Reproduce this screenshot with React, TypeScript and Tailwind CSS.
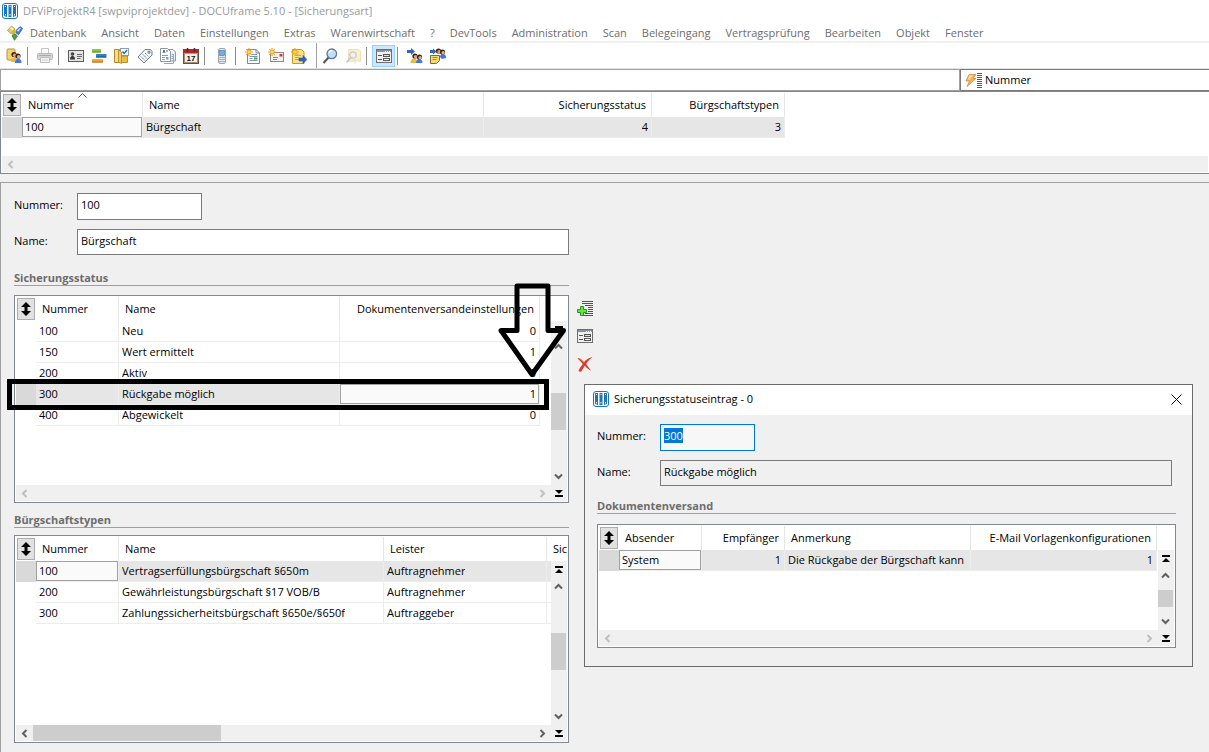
import React, { useEffect, useRef } from "react"

interface Column {
	title: string
	width: number
	align?: "right"
	sorted?: boolean
}

interface DataGridProps {
	label: string
	columns: Column[]
	rows: string[][]
	selectedRow: number
	focusedColumn: number
	className: string
	verticalBar?: boolean
	scrollable?: boolean
	openEnd?: boolean
}

const MENU = [
	"Datenbank",
	"Ansicht",
	"Daten",
	"Einstellungen",
	"Extras",
	"Warenwirtschaft",
	"?",
	"DevTools",
	"Administration",
	"Scan",
	"Belegeingang",
	"Vertragsprüfung",
	"Bearbeiten",
	"Objekt",
	"Fenster",
]

const Icon = ({ children }: { children: React.ReactNode }) => (
	<svg width="16" height="16" viewBox="0 0 16 16" fill="none" className="block shrink-0" aria-hidden="true">
		{children}
	</svg>
)

const AppIcon = () => (
	<Icon>
		<rect x="0.5" y="0.5" width="15" height="15" rx="2.5" fill="#fff" stroke="#1b75bb" />
		<path d="M2 2h3v12L2 13zM6.500 2h3v12h-3zM11 2h3v11l-3 1z" fill="#1b75bb" />
		<path d="M3.500 3v1M8 3v1M12.500 3v1M3.500 11v1.500M8 11v1.500M12.500 11v1.500" stroke="#fff" />
	</Icon>
)

const DatabaseIcon = () => (
	<Icon>
		<path d="M4.500 1L8 4 4 8.500.5 5.500z" fill="#e3cd5c" stroke="#a08a2c" strokeWidth="0.700" />
		<path d="M4.500 1.800L7 4 5.500 5.500 3 3.500z" fill="#f7eeb0" />
		<path d="M9 5.500L13 1.500l2.600 2-4.100 6.300-2.500-2z" fill="#4a7fd6" stroke="#264f9c" strokeWidth="0.700" />
		<path d="M9.800 5.500L13 2.500l1 .8-3 3.700z" fill="#b9d3f7" />
		<path d="M5 10.500L7.800 8.500l2.700 2.500-3 4.300z" fill="#4f9e3f" stroke="#2c6a24" strokeWidth="0.700" />
		<path d="M4 8.500L8 4.500 9 7.500 6 9.500z" fill="#cdb440" />
	</Icon>
)

const Head = ({ x, y }: { x: number; y: number }) => (
	<>
		<circle cx={x} cy={y} r="2.600" fill="#3a2417" />
		<ellipse cx={x + 0.6} cy={y + 0.7} rx="1.700" ry="1.800" fill="#e8a878" />
	</>
)

const UsersIcon = () => (
	<Icon>
		<rect x="1" y="1" width="8" height="11" rx="1" fill="#f0d573" stroke="#b8923a" />
		<path d="M5 14c0-3 1.500-4 3-4s3 1 3 4z" fill="#f0b33c" />
		<path d="M9 15c0-3 1.500-4.500 3.200-4.500S15.500 12 15.500 15z" fill="#3f78e0" />
		<Head x={8} y={6.5} />
		<Head x={12} y={8} />
	</Icon>
)

const PrinterIcon = () => (
	<Icon>
		<path d="M4.500 6V.5h7V6" fill="#fafafa" stroke="#c4c4c4" />
		<rect x="0.500" y="5.500" width="15" height="6" rx="1" fill="#d4d4d4" stroke="#b8b8b8" />
		<path d="M3.500 9.500h9v5h-9z" fill="#f3f3f3" stroke="#bcbcbc" />
		<path d="M2 7.500h12" stroke="#a9a9a9" />
		<path d="M5 12h6" stroke="#cfcfcf" />
	</Icon>
)

const ContactCardIcon = () => (
	<Icon>
		<rect x="0.500" y="2.500" width="15" height="11" fill="#e4e4e4" stroke="#5c5c5c" />
		<circle cx="4.500" cy="6" r="1.800" fill="#444" />
		<path d="M2 11.500c0-2.500 1-3.500 2.500-3.500S7 9 7 11.500z" fill="#333" />
		<path d="M9 6.500h5M9 8.500h5M9 10.500h3.500" stroke="#6a6a6a" />
	</Icon>
)

const GanttIcon = () => (
	<Icon>
		<rect x="1" y="1" width="9" height="3.500" rx="0.500" fill="#8cc53e" />
		<path d="M1 4h9" stroke="#5c8f1f" />
		<rect x="5" y="6" width="10.500" height="3.500" rx="0.500" fill="#2f7fc4" />
		<path d="M5 9h10" stroke="#17548c" />
		<rect x="1" y="11" width="11" height="3.500" rx="0.500" fill="#f0a63c" />
		<path d="M1 14h11" stroke="#b06f12" />
	</Icon>
)

const TaskFolderIcon = () => (
	<Icon>
		<path d="M.5 1.500h5v13h-5z" fill="#f6dc8a" stroke="#b58a24" />
		<rect x="6.500" y="0.500" width="8" height="7" fill="#fff" stroke="#8aa0b8" />
		<path d="M8.500 3.500l1.700 2L13 2" stroke="#2166b8" strokeWidth="1.300" />
		<path d="M5.500 8h8v6.500h-8z" fill="#e9bd49" stroke="#a87d1c" strokeWidth="0.800" />
		<path d="M4.500 2l3 2v11.500l-3-1.500z" fill="#f3cc62" stroke="#a87d1c" strokeWidth="0.700" />
	</Icon>
)

const TagIcon = () => (
	<Icon>
		<path d="M8 1.500h5.500l1.500 2V7l-8 8L1 9z" fill="#f4f6f8" stroke="#6f7d8c" />
		<circle cx="12" cy="4.200" r="1.100" fill="#fff" stroke="#5b6976" />
		<path d="M4 8.500l4 4M6 6.500l4 4M8 5l3.500 3.500" stroke="#6e7b89" strokeDasharray="1.500 0.700" />
	</Icon>
)

const DocumentsIcon = () => (
	<Icon>
		<path d="M7.500 1.500H13l2.500 2.500v9h-8z" fill="#eef3fa" stroke="#8c98a8" />
		<path d="M.5.5h7l3 3v10H.5z" fill="#fff" stroke="#8c98a8" />
		<path d="M3 5l1-3 1 3M6 3h2" stroke="#3565b8" />
		<path d="M2 7.500h6M2 9.500h3" stroke="#7d9cc9" />
		<path d="M4 15.500h9.500V6" stroke="#9aa5b2" />
		<path d="M6 9h2.500v2.500H6z" fill="#6fa6d8" />
		<path d="M2 11.500h3M11.500 6.500h2.500M11.500 8.500h2.500M11.500 10.500h2.500" stroke="#8aa7cd" />
	</Icon>
)

const CalendarIcon = () => (
	<Icon>
		<rect x="0.500" y="1.500" width="15" height="14" fill="#f5f1ea" stroke="#6d4a3a" />
		<path d="M1 2h14v3.500H1z" fill="#b3262a" />
		<path d="M4.500 0v3.500M11.500 0v3.500" stroke="#4a2a22" strokeWidth="1.500" />
		<path d="M1 14.500h14M1.500 6v9M14.500 6v9" stroke="#a48f7a" />
		<text x="8" y="13" textAnchor="middle" fontSize="8" fontWeight="700" fill="#111" fontFamily="Liberation Sans, sans-serif">
			17
		</text>
	</Icon>
)

const PhoneIcon = () => (
	<Icon>
		<rect x="4.500" y="0.500" width="7" height="15" rx="1.500" fill="#e4e7ea" stroke="#a0a6ad" />
		<rect x="5.500" y="2.500" width="5" height="5" fill="#6fb0ea" stroke="#3a78b8" strokeWidth="0.600" />
		<path d="M5.500 9.500h5M5.500 11.500h5M5.500 13.500h5" stroke="#8b9299" strokeDasharray="1.200 0.700" />
	</Icon>
)

const Star = () => (
	<>
		<path d="M4 0v8M0 4h8M1.200 1.200l5.600 5.600M6.800 1.200L1.200 6.800" stroke="#f0a41c" strokeWidth="1.200" />
		<circle cx="4" cy="4" r="1.600" fill="#ffd766" />
	</>
)

const NewDocumentIcon = () => (
	<Icon>
		<path d="M2.500 1.500H11L14.500 5v10.500h-12z" fill="#fafcff" stroke="#7d8894" />
		<path d="M11 1.500V5h3.500" stroke="#7d8894" />
		<path d="M7 6.500h5M4.500 8.500h8M4.500 10.500h3M4.500 12.500h8" stroke="#7b95b8" />
		<path d="M9 9.500h3.500v2H9z" fill="#58a04c" />
		<Star />
	</Icon>
)

const NewMailIcon = () => (
	<Icon>
		<rect x="2.500" y="4.500" width="13" height="9" fill="#f1f1ee" stroke="#8c8c88" />
		<path d="M11.500 6h3v2.500h-3z" fill="#cf3a3a" />
		<path d="M5 9.500h5M5 11.500h4" stroke="#85857f" />
		<Star />
	</Icon>
)

const ForwardNoteIcon = () => (
	<Icon>
		<path d="M1.500 1.500h9L13 4v11.500H1.500z" fill="#fbe384" stroke="#c09a34" />
		<path d="M4 7.500h6M4 9.500h4M4 11.500h4" stroke="#c9a544" />
		<path d="M8 10h4V7.500l4 4-4 4V13H8z" fill="#2f66c4" stroke="#1c458e" strokeWidth="0.500" />
		<Star />
	</Icon>
)

const SearchIcon = () => (
	<Icon>
		<path d="M6.500 9.500L1.500 15" stroke="#51565c" strokeWidth="2" />
		<circle cx="9.800" cy="5.800" r="4.800" fill="#bfe0f8" stroke="#5d7890" strokeWidth="1.300" />
		<path d="M7 5a3.200 3.200 0 013-2.500" stroke="#fff" strokeWidth="1.300" />
	</Icon>
)

const SearchFolderIcon = () => (
	<Icon>
		<path d="M3.500 1.500h10l2 1.500v10.500l-5-1-7 1z" fill="#fbefce" stroke="#eedfb8" />
		<circle cx="8" cy="7" r="3.200" fill="#eef1f2" stroke="#c9c9c4" strokeWidth="1.200" />
		<path d="M5.800 9.500l-4.300 5" stroke="#c9c9c4" strokeWidth="1.800" />
		<path d="M10 11v4.500" stroke="#eadbb2" />
	</Icon>
)

const FormIcon = () => (
	<Icon>
		<g shapeRendering="crispEdges">
			<rect x="0.500" y="1.500" width="15" height="13" fill="#f0f0f0" stroke="#6b6f72" />
			<path d="M1 3h14" stroke="#8a939c" strokeWidth="2" />
			<path d="M9 3h1M11 3h1M13 3h1" stroke="#fff" />
			<path d="M2 7.500h4M2 11.500h4" stroke="#555" />
			<rect x="7.500" y="6.500" width="6" height="2" fill="#ffe46b" stroke="#555" />
			<rect x="7.500" y="10.500" width="6" height="2" fill="#fff" stroke="#555" />
		</g>
	</Icon>
)

const AssignUsersIcon = () => (
	<Icon>
		<path d="M0 2h4V0l4 3.500L4 7V5H0z" fill="#2f66c4" />
		<path d="M3.500 15c0-3 1.500-4.500 3.500-4.500s3 1.500 3 4.500z" fill="#f0b93c" />
		<path d="M9 15c0-3 1.500-4 3-4s3.500 1 3.500 4z" fill="#3f78e0" />
		<Head x={8} y={8} />
		<Head x={12.5} y={9} />
	</Icon>
)

const AssignNoteIcon = () => (
	<Icon>
		<path d="M10 9c0-2 1-3 3-3s3 1 3 4l-4 1z" fill="#3f78e0" />
		<Head x={8.5} y={3} />
		<Head x={12.5} y={4} />
		<path d="M0 2h3V.5L6.500 3.500 3 6.500V5H0z" fill="#2f66c4" />
		<path d="M.5 7.500h9v5l-3 3h-6z" fill="#f4da77" stroke="#806a2c" />
		<path d="M2.500 9.500h5M2.500 11.500h4" stroke="#a68a3c" />
	</Icon>
)

const BoltIcon = () => (
	<svg width="12" height="16" viewBox="0 0 12 16" className="block shrink-0" aria-hidden="true">
		<path d="M4 2.500h7L8 6.500h3L2 14.500l2.500-5.500H1z" fill="#f4b25a" stroke="#b87438" strokeWidth="0.600" />
		<path d="M4.500 3.200h3.500L4.500 7.500H3z" fill="#ffe39a" />
	</svg>
)

const LinesIcon = () => (
	<svg width="5" height="16" viewBox="0 0 5 16" className="block shrink-0" aria-hidden="true">
		<path d="M0 1.500h5M0 3.500h5M0 5.500h5M0 7.500h5M0 9.500h5M0 11.500h5M0 13.500h5M0 15.500h5" stroke="#555" />
	</svg>
)

const AddRowIcon = () => (
	<Icon>
		<g shapeRendering="crispEdges">
			<path
				d="M5 1.500h11M5 3.500h11M8 5.500h8M11 7.500h5M11 9.500h5M11 11.500h5M8 13.500h8M5 15.500h11"
				stroke="#555"
			/>
		</g>
		<path d="M3.500 6.500h3v3h3v3h-3v3h-3v-3h-3v-3h3z" fill="#6fe04a" stroke="#1f9b1c" />
	</Icon>
)

const DeleteIcon = () => (
	<Icon>
		<path
			d="M.5 2.500c2-1 4 .5 6.500 3.500C9.500 3.500 12 1.500 15.500 1 12.500 3.500 10.500 5.500 9 8c2 2.500 3.500 4.500 5 6.500-1.500 0-3.500-2-6.200-4.700C6 12.500 5 14.500 4 15.800c-1 .2-2-.2-2.500-1C2.500 12.500 4 10.200 5.800 8 4 6 2.500 4 .5 2.500z"
			fill="#dc3a2a"
		/>
		<path d="M2.500 2.800c1.500.3 3 1.800 4.500 3.600" stroke="#f39a8e" />
	</Icon>
)

const ColumnsIcon = () => (
	<svg width="10" height="14" viewBox="0 0 10 14" className="block" aria-hidden="true">
		<path d="M5 0l5 5H6.500v4H10l-5 5-5-5h3.500V5H0z" fill="#000" />
	</svg>
)

const TopIcon = () => (
	<svg width="8" height="8" viewBox="0 0 8 8" className="block" aria-hidden="true">
		<path d="M0 0h8v2H0zM4 3l4 4H0z" fill="#000" />
	</svg>
)

const BottomIcon = () => (
	<svg width="8" height="8" viewBox="0 0 8 8" className="block" aria-hidden="true">
		<path d="M0 6h8v2H0zM0 1h8L4 5z" fill="#000" />
	</svg>
)

const CHEVRONS = {
	up: "M1 6.500l3.500-3.500L8 6.500",
	down: "M1 2.500L4.500 6 8 2.500",
	left: "M6.500 1L3 4.500 6.500 8",
	right: "M2.500 1L6 4.500 2.500 8",
}

const Chevron = ({ dir, disabled }: { dir: keyof typeof CHEVRONS; disabled?: boolean }) => (
	<svg width="9" height="9" viewBox="0 0 9 9" fill="none" className="block" aria-hidden="true">
		<path d={CHEVRONS[dir]} stroke={disabled ? "#bfbfbf" : "#606060"} strokeWidth="2" />
	</svg>
)

const ScrollButton = ({ label, className, children }: { label: string; className: string; children: React.ReactNode }) => (
	<button type="button" aria-label={label} className={`flex shrink-0 items-center justify-center ${className}`}>
		{children}
	</button>
)

const DataGrid: React.FC<DataGridProps> = ({
	label,
	columns,
	rows,
	selectedRow,
	focusedColumn,
	className,
	verticalBar,
	scrollable,
	openEnd,
}) => (
	<div
		className={`grid grid-cols-[minmax(0,1fr)_16px] grid-rows-[24px_minmax(0,1fr)_16px] border border-[#828790] bg-white p-px ${className}`}>
		<div className="col-span-2 col-start-1 row-span-2 row-start-1 overflow-hidden">
			<table className="w-0 table-fixed border-separate border-spacing-0 whitespace-nowrap" aria-label={label}>
				<colgroup>
					<col style={{ width: 20 }} />
					{columns.map((c) => (
						<col key={c.title} style={{ width: c.width }} />
					))}
				</colgroup>
				<thead>
					<tr className="h-6">
						<th className="p-px">
							<button
								type="button"
								aria-label="Spalten"
								className="flex h-[22px] w-[18px] items-center justify-center border border-[#adadad] bg-[#e1e1e1]">
								<ColumnsIcon />
							</button>
						</th>
						{columns.map((c, i) => (
							<th
								key={c.title}
								className={`relative p-0 font-normal ${c.align === "right" ? "pr-[5px] text-right" : "pl-1.5 text-left"} ${
									openEnd && i === columns.length - 1 ? "" : "border-r border-[#e5e5e5]"
								}`}>
								{c.title}
								{c.sorted && (
									<svg
										width="9"
										height="5"
										viewBox="0 0 9 5"
										fill="none"
										className="absolute top-0 left-1/2 -ml-1"
										aria-hidden="true">
										<path d="M.5 4.500l4-4 4 4" stroke="#555" />
									</svg>
								)}
							</th>
						))}
					</tr>
				</thead>
				<tbody>
					{rows.map((row, r) => (
						<tr key={row[0]} className={`h-[21px] ${r === selectedRow ? "bg-[#e6e6e6]" : ""}`}>
							<td className={`p-0 ${r === selectedRow ? "bg-[#d9d9d9]" : ""}`} />
							{row.map((cell, i) => {
								const focused = r === selectedRow && i === focusedColumn
								return (
									<td key={i} className="overflow-hidden border-r border-b border-[#ededed] p-0">
										<div
											className={`flex h-5 items-center ${columns[i].align === "right" ? "justify-end" : ""} ${
												focused ? "border border-[#a0a0a0] bg-[#fafafa] px-0.5" : "px-[3px]"
											}`}>
											<span className="overflow-hidden">{cell}</span>
										</div>
									</td>
								)
							})}
						</tr>
					))}
				</tbody>
			</table>
		</div>
		{verticalBar && (
			<div className="col-start-2 row-span-2 row-start-2 flex flex-col bg-[#f0f0f0]">
				<ScrollButton label="Zum Anfang" className="h-[17px] w-4">
					<TopIcon />
				</ScrollButton>
				<ScrollButton label="Nach oben" className="h-[17px] w-[15px]">
					<Chevron dir="up" />
				</ScrollButton>
				<div className="flex min-h-0 flex-1 flex-col justify-center">
					<div className="h-[37px] max-h-3/5 w-[15px] bg-[#cdcdcd]" />
				</div>
				<ScrollButton label="Nach unten" className="h-[17px] w-[15px]">
					<Chevron dir="down" />
				</ScrollButton>
				<ScrollButton label="Zum Ende" className="h-4 w-4">
					<BottomIcon />
				</ScrollButton>
			</div>
		)}
		<div className={`row-start-3 flex items-center justify-between bg-[#f0f0f0] ${verticalBar ? "" : "col-span-2"}`}>
			<ScrollButton label="Nach links" className="h-4 w-[17px]">
				<Chevron dir="left" disabled={!scrollable} />
			</ScrollButton>
			{scrollable && (
				<div className="h-4 flex-1">
					<div className="h-4 w-[188px] bg-[#cdcdcd]" />
				</div>
			)}
			{verticalBar && (
				<ScrollButton label="Nach rechts" className="h-4 w-[17px]">
					<Chevron dir="right" disabled={!scrollable} />
				</ScrollButton>
			)}
		</div>
	</div>
)

const SectionTitle = ({ children, className }: { children: string; className: string }) => (
	<h2 className={`h-[17px] border-b border-[#a0a0a0] leading-[18px] font-bold text-[#6d6d6d] ${className}`}>{children}</h2>
)

const ToolButton = ({ label, active, children }: { label: string; active?: boolean; children: React.ReactNode }) => (
	<button
		type="button"
		aria-label={label}
		className={`flex h-[22px] w-[23px] items-center justify-center ${
			active ? "border border-[#99d1ff] bg-[#cce8ff]" : ""
		}`}>
		{children}
	</button>
)

const ToolSeparator = () => <div className="mr-[5px] ml-0.5 h-[18px] w-px bg-[#8d8d8d]" />

const Toolbar = () => (
	<div className="flex h-[26px] items-center border-b border-[#e3e3e3] bg-white pl-0.5">
		<ToolButton label="Benutzer">
			<UsersIcon />
		</ToolButton>
		<ToolSeparator />
		<ToolButton label="Drucken">
			<PrinterIcon />
		</ToolButton>
		<ToolSeparator />
		<ToolButton label="Adressen">
			<ContactCardIcon />
		</ToolButton>
		<ToolButton label="Projekte">
			<GanttIcon />
		</ToolButton>
		<ToolButton label="Aufgaben">
			<TaskFolderIcon />
		</ToolButton>
		<ToolButton label="Artikel">
			<TagIcon />
		</ToolButton>
		<ToolButton label="Dokumente">
			<DocumentsIcon />
		</ToolButton>
		<ToolButton label="Kalender">
			<CalendarIcon />
		</ToolButton>
		<ToolSeparator />
		<ToolButton label="Telefon">
			<PhoneIcon />
		</ToolButton>
		<ToolSeparator />
		<ToolButton label="Neues Dokument">
			<NewDocumentIcon />
		</ToolButton>
		<ToolButton label="Neue E-Mail">
			<NewMailIcon />
		</ToolButton>
		<ToolButton label="Neue Notiz">
			<ForwardNoteIcon />
		</ToolButton>
		<div className="mr-px ml-1.5 w-px self-stretch bg-[#a0a0a0]" />
		<ToolButton label="Suchen">
			<SearchIcon />
		</ToolButton>
		<ToolButton label="Ordner durchsuchen">
			<SearchFolderIcon />
		</ToolButton>
		<ToolSeparator />
		<ToolButton label="Formular" active>
			<FormIcon />
		</ToolButton>
		<ToolSeparator />
		<ToolButton label="Zuweisen">
			<AssignUsersIcon />
		</ToolButton>
		<ToolButton label="Notiz zuweisen">
			<AssignNoteIcon />
		</ToolButton>
	</div>
)

const StatusEntryDialog = () => {
	const numberRef = useRef<HTMLInputElement>(null)

	useEffect(() => {
		numberRef.current?.focus({ preventScroll: true })
		numberRef.current?.select()
	}, [])

	return (
		<section
			role="dialog"
			aria-labelledby="dialog-title"
			className="absolute top-[384px] left-[584px] w-[609px] border border-[#6b6b6b] bg-[#f0f0f0]">
			<header className="flex h-[30px] items-center bg-white px-2 pb-0.5">
				<AppIcon />
				<h1 id="dialog-title" className="ml-[5px] flex-1">
					Sicherungsstatuseintrag - 0
				</h1>
				<button type="button" aria-label="Schließen" className="flex h-4 w-[15px] items-center justify-center">
					<svg width="11" height="11" viewBox="0 0 11 11" aria-hidden="true">
						<path d="M.5.5l10 10M10.500.5l-10 10" stroke="#000" />
					</svg>
				</button>
			</header>
			<div className="pt-[9px] pr-4 pb-[18px] pl-3">
				<div className="flex">
					<label htmlFor="entry-number" className="w-[63px] leading-6">
						Nummer:
					</label>
					<input
						id="entry-number"
						ref={numberRef}
						defaultValue="300"
						className="h-[27px] w-[95px] border border-[#0078d7] bg-[#f7f7f7] px-[3px] pb-1 outline-none selection:bg-[#0078d7] selection:text-white"
					/>
				</div>
				<div className="mt-[9px] mr-1 flex">
					<label htmlFor="entry-name" className="w-[63px] leading-6">
						Name:
					</label>
					<input
						id="entry-name"
						readOnly
						defaultValue="Rückgabe möglich"
						className="h-[26px] min-w-0 flex-1 border border-[#7a7a7a] bg-[#f0f0f0] px-[3px] pb-1 outline-none"
					/>
				</div>
				<SectionTitle className="mt-[11px]">Dokumentenversand</SectionTitle>
				<DataGrid
					label="Dokumentenversand"
					className="mt-2.5 h-[124px]"
					columns={[
						{ title: "Absender", width: 83 },
						{ title: "Empfänger", width: 83, align: "right" },
						{ title: "Anmerkung", width: 186 },
						{ title: "E-Mail Vorlagenkonfigurationen", width: 186, align: "right" },
					]}
					rows={[["System", "1", "Die Rückgabe der Bürgschaft kann", "1"]]}
					selectedRow={0}
					focusedColumn={0}
					verticalBar
				/>
			</div>
		</section>
	)
}

// Hand-drawn marker around the selected status row, laid over the grid
const RowMarker = () => (
	<svg
		width="560"
		height="128"
		viewBox="0 0 560 128"
		fill="none"
		className="pointer-events-none absolute -top-3 -left-[7px]"
		aria-hidden="true">
		<rect x="2.500" y="98.500" width="537" height="26" stroke="#000" strokeWidth="5" />
		<path d="M510 3h31v44.500h15.500l-31.500 44-31-44h16z" stroke="#000" strokeWidth="5" strokeLinejoin="round" />
	</svg>
)

export default function App() {
	return (
		<div className="relative flex min-h-screen flex-col overflow-hidden bg-[#f0f0f0] font-['Open_Sans',sans-serif] text-[11px] leading-4 text-black">
			<header className="flex h-[22px] items-center bg-white pl-0.5 text-[#999999]">
				<AppIcon />
				<span className="ml-[5px]">DFViProjektR4 [swpviprojektdev] - DOCUframe 5.10 - [Sicherungsart]</span>
			</header>
			<nav className="flex h-[21px] items-center border-b-2 border-[#f0f0f0] bg-white pt-0.5 pl-[7px] text-[#6d6d6d]">
				<DatabaseIcon />
				<div className="ml-[7px] flex gap-[15px]">
					{MENU.map((item) => (
						<button key={item} type="button">
							{item}
						</button>
					))}
				</div>
			</nav>
			<Toolbar />
			<div className="flex h-[22px] bg-white">
				<input aria-label="Suche" className="min-w-0 flex-1 border border-[#a0a0a0] px-1 outline-none" />
				<div className="flex w-[249px] items-center border border-r-0 border-[#7a7a7a] pl-1">
					<BoltIcon />
					<LinesIcon />
					<select aria-label="Suchfeld" className="flex-1 appearance-none bg-transparent pl-[3px] outline-none">
						<option>Nummer</option>
					</select>
				</div>
			</div>
			<DataGrid
				label="Sicherungsarten"
				className="h-[83px] border-r-0"
				columns={[
					{ title: "Nummer", width: 121, sorted: true },
					{ title: "Name", width: 341 },
					{ title: "Sicherungsstatus", width: 168, align: "right" },
					{ title: "Bürgschaftstypen", width: 133, align: "right" },
				]}
				rows={[["100", "Bürgschaft", "4", "3"]]}
				selectedRow={0}
				focusedColumn={0}
			/>
			<main className="mt-2 flex flex-1 gap-2 border-t border-l border-[#a0a0a0] pt-2.5 pb-2 pl-[13px]">
				<div className="w-[555px]">
					<div className="flex">
						<label htmlFor="number" className="w-[63px] leading-6">
							Nummer:
						</label>
						<input
							id="number"
							defaultValue="100"
							className="h-[27px] w-[125px] border border-[#7a7a7a] bg-white px-[3px] pb-1 outline-none"
						/>
					</div>
					<div className="mt-[9px] flex">
						<label htmlFor="name" className="w-[63px] leading-6">
							Name:
						</label>
						<input
							id="name"
							defaultValue="Bürgschaft"
							className="h-[26px] min-w-0 flex-1 border border-[#7a7a7a] bg-white px-[3px] pb-1 outline-none"
						/>
					</div>
					<SectionTitle className="mt-3.5">Sicherungsstatus</SectionTitle>
					<div className="relative mt-[9px]">
						<DataGrid
							label="Sicherungsstatus"
							className="h-52"
							columns={[
								{ title: "Nummer", width: 83 },
								{ title: "Name", width: 221 },
								{ title: "Dokumentenversandeinstellungen", width: 200, align: "right" },
							]}
							rows={[
								["100", "Neu", "0"],
								["150", "Wert ermittelt", "1"],
								["200", "Aktiv", "0"],
								["300", "Rückgabe möglich", "1"],
								["400", "Abgewickelt", "0"],
							]}
							selectedRow={3}
							focusedColumn={2}
							verticalBar
						/>
						<RowMarker />
					</div>
					<SectionTitle className="mt-2">Bürgschaftstypen</SectionTitle>
					<DataGrid
						label="Bürgschaftstypen"
						className="mt-[7px] h-52"
						columns={[
							{ title: "Nummer", width: 83 },
							{ title: "Name", width: 265 },
							{ title: "Leister", width: 163 },
							{ title: "Sic", width: 20 },
						]}
						rows={[
							["100", "Vertragserfüllungsbürgschaft §650m", "Auftragnehmer", ""],
							["200", "Gewährleistungsbürgschaft §17 VOB/B", "Auftragnehmer", ""],
							["300", "Zahlungssicherheitsbürgschaft §650e/§650f", "Auftraggeber", ""],
						]}
						selectedRow={0}
						focusedColumn={0}
						verticalBar
						scrollable
						openEnd
					/>
				</div>
				<div className="mt-[107px] flex flex-col gap-3">
					<button type="button" aria-label="Hinzufügen">
						<AddRowIcon />
					</button>
					<button type="button" aria-label="Bearbeiten">
						<FormIcon />
					</button>
					<button type="button" aria-label="Löschen">
						<DeleteIcon />
					</button>
				</div>
			</main>
			<StatusEntryDialog />
		</div>
	)
}
